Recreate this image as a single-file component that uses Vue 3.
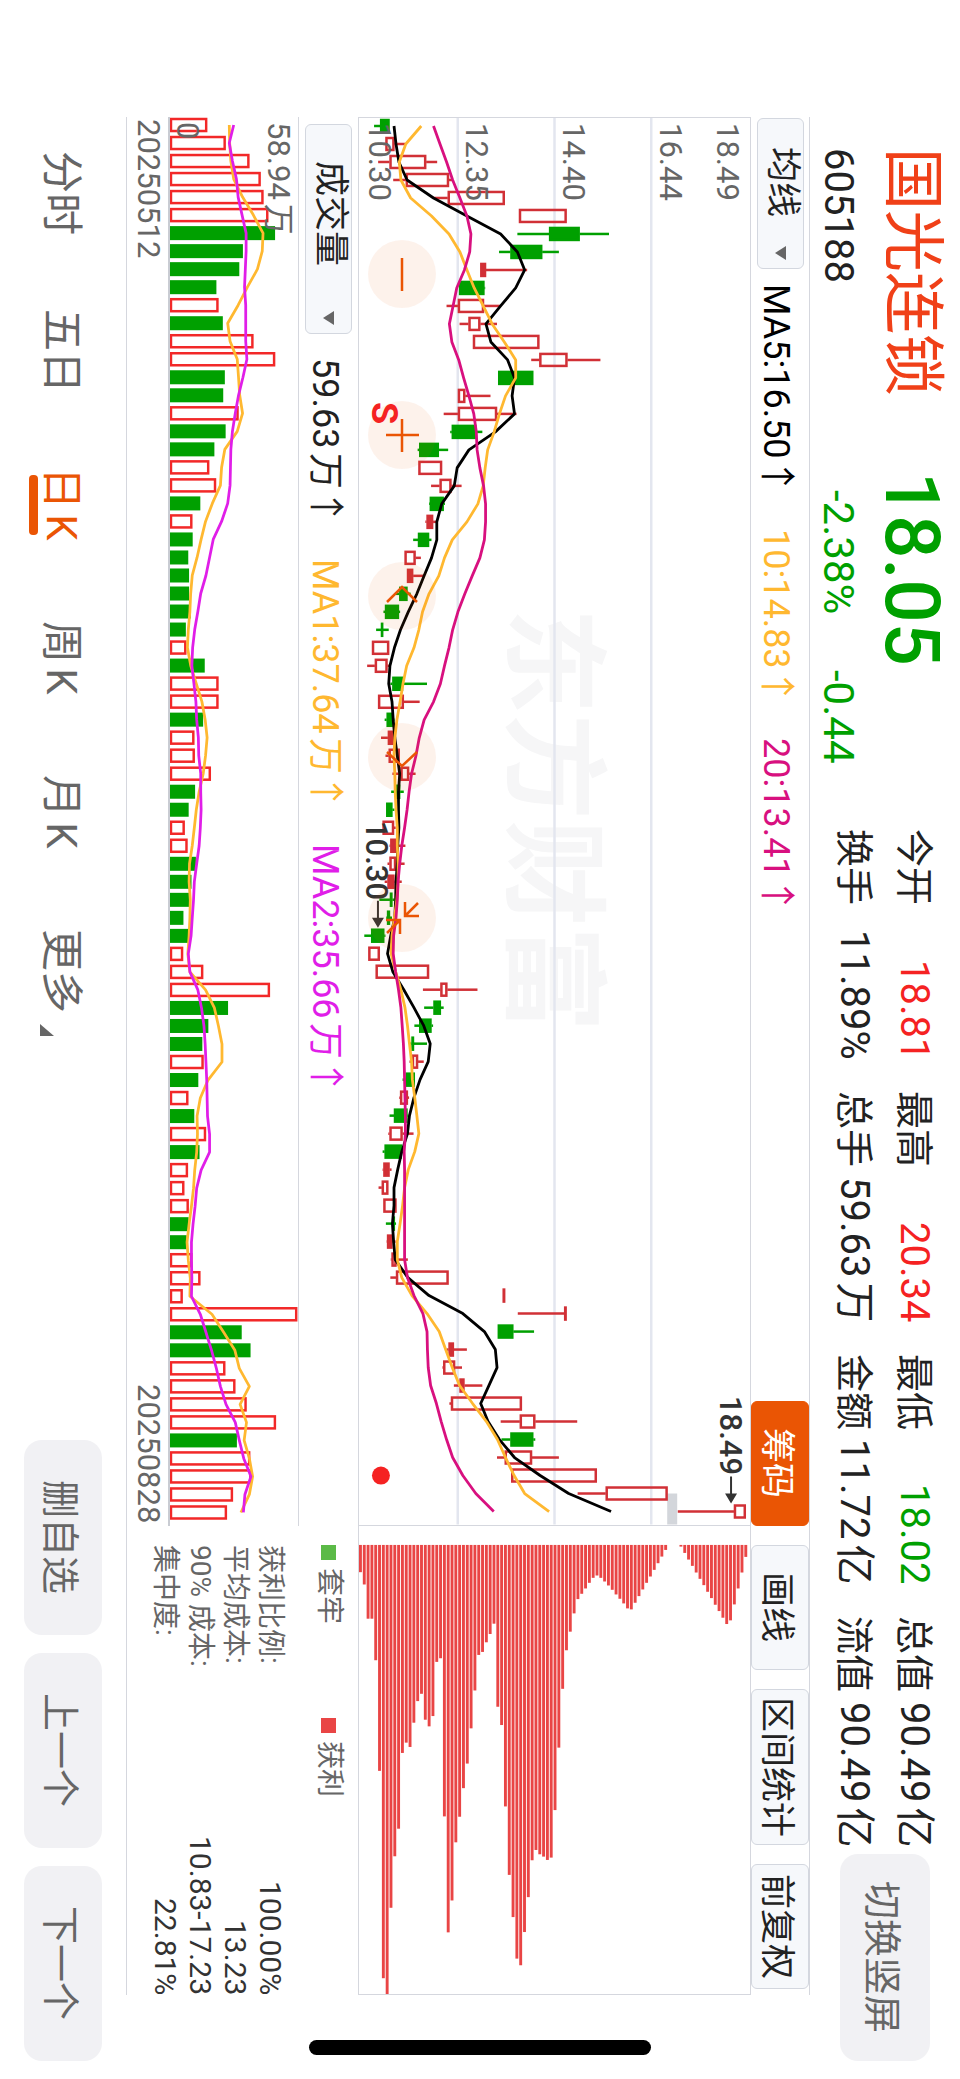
<template>
  <div class="screen">
    <header class="header">
      <div class="quote">
        <h1 class="name">国光连锁</h1>
        <strong class="price">18.05</strong>
        <span class="code">605188</span>
        <div class="change">
          <span>-2.38%</span>
          <span>-0.44</span>
        </div>
      </div>

      <div class="stats">
        <div v-for="item in stats" :key="item.label" class="stat">
          <span>{{ item.label }}</span>
          <span class="stat-value" :class="item.tone">{{ item.value }}</span>
        </div>
      </div>

      <button type="button" class="soft-btn rotate-btn">切换竖屏</button>
    </header>

    <main class="main">
      <div class="toolbar">
        <label class="picker">
          <select class="picker-select" aria-label="主图指标">
            <option>均线</option>
          </select>
          <svg class="caret" viewBox="0 0 11 14"><path d="M0 7 11 0v14z" /></svg>
        </label>
        <span class="ma ma5">MA5:16.50<i>↑</i></span>
        <span class="ma ma10">10:14.83<i>↑</i></span>
        <span class="ma ma20">20:13.41<i>↑</i></span>
        <div class="tools">
          <button type="button" class="tool active">筹码</button>
          <button type="button" class="tool">画线</button>
          <button type="button" class="tool wide">区间统计</button>
          <button type="button" class="tool">前复权</button>
        </div>
      </div>

      <div class="panels">
        <section class="price-chart">
          <span class="watermark">东方财富</span>
          <svg class="plot" viewBox="0 0 392 1407" preserveAspectRatio="none">
            <line v-for="x in gridLines" :key="x" :x1="x" :x2="x" y1="0" y2="1407" class="grid-line" />
            <rect x="309" y="1376" width="10" height="31" class="gap-mark" />
            <g v-for="(c, i) in candles" :key="i" :class="c.type">
              <line :x1="c.low" :x2="c.bodyLow" :y1="c.y" :y2="c.y" class="wick" />
              <line :x1="c.bodyHigh" :x2="c.high" :y1="c.y" :y2="c.y" class="wick" />
              <rect :x="c.bodyLow + 1" :y="c.y - 6" :width="c.bodyWidth" height="12" class="body" />
            </g>
            <polyline :points="priceLines.ma5" class="line ma5-line" />
            <polyline :points="priceLines.ma10" class="line ma10-line" />
            <polyline :points="priceLines.ma20" class="line ma20-line" />
            <circle cx="22" cy="1358" r="9" class="event-dot" />
            <g class="pointer">
              <path d="M19 783v20M373 1359v20" />
              <path d="M13 800h12l-6 10zM367 1376h12l-6 10z" class="pointer-head" />
            </g>
          </svg>

          <span
            v-for="tick in priceTicks"
            :key="tick.text"
            class="tick"
            :style="{ insetBlockEnd: tick.offset + 'px' }"
          >{{ tick.text }}</span>
          <span class="mark low-mark">10.30</span>
          <span class="mark high-mark">18.49</span>

          <div class="controls">
            <button v-for="c in controls" :key="c.label" type="button" class="control" :aria-label="c.label">
              <svg viewBox="-34 -34 68 68"><path :d="c.path" /></svg>
            </button>
          </div>
          <span class="sell">S</span>
        </section>

        <section class="chips-chart">
          <svg class="plot" viewBox="0 0 392 470" preserveAspectRatio="none">
            <rect v-for="(b, i) in chips" :key="i" :x="b.x" y="19" width="2.9" :height="b.size" />
          </svg>
        </section>

        <div class="volume-bar">
          <label class="picker">
            <select class="picker-select volume-select" aria-label="副图指标">
              <option>成交量</option>
            </select>
            <svg class="caret" viewBox="0 0 11 14"><path d="M0 7 11 0v14z" /></svg>
          </label>
          <span class="ma volume-now">59.63万<i>↑</i></span>
          <span class="ma ma10">MA1:37.64万<i>↑</i></span>
          <span class="ma ma-volume">MA2:35.66万<i>↑</i></span>
        </div>

        <div class="legend">
          <span class="legend-item trapped">套牢</span>
          <span class="legend-item profit">获利</span>
        </div>

        <section class="volume">
          <div class="volume-chart">
            <svg class="plot" viewBox="0 0 130 1407" preserveAspectRatio="none">
              <template v-for="(v, i) in volumes" :key="i">
                <rect v-if="v.up" x="1" :y="v.y - 6" :width="v.size - 2" height="12" class="volume-up" />
                <rect v-else x="0" :y="v.y - 7" :width="v.size" height="14" class="volume-down" />
              </template>
              <polyline :points="volumeLines.ma1" class="line ma10-line" />
              <polyline :points="volumeLines.ma2" class="line ma-volume-line" />
            </svg>
            <span class="tick volume-top">58.94万</span>
            <span class="tick volume-zero">0</span>
          </div>
          <div class="dates">
            <span>20250512</span>
            <span>20250828</span>
          </div>
        </section>

        <dl class="cost">
          <div v-for="row in cost" :key="row.label">
            <dt>{{ row.label }}:</dt>
            <dd>{{ row.value }}</dd>
          </div>
        </dl>
      </div>
    </main>

    <footer class="footer">
      <nav class="tabs">
        <a v-for="tab in tabs" :key="tab" href="#" class="tab" :class="{ current: tab === '日K' }">{{ tab }}</a>
        <a href="#" class="tab more">更多<svg viewBox="0 0 14 12"><path d="M0 0v12h14z" /></svg></a>
      </nav>
      <div class="actions">
        <button type="button" class="soft-btn">删自选</button>
        <button type="button" class="soft-btn">上一个</button>
        <button type="button" class="soft-btn">下一个</button>
      </div>
    </footer>
    <div class="home-indicator"></div>
  </div>
</template>

<script setup>
const stats = [
  { label: '今开', value: '18.81', tone: 'up' },
  { label: '最高', value: '20.34', tone: 'up' },
  { label: '最低', value: '18.02', tone: 'down' },
  { label: '总值', value: '90.49亿' },
  { label: '换手', value: '11.89%' },
  { label: '总手', value: '59.63万' },
  { label: '金额', value: '11.72亿' },
  { label: '流值', value: '90.49亿' }
];

const tabs = ['分时', '五日', '日K', '周K', '月K'];

const cost = [
  { label: '获利比例', value: '100.00%' },
  { label: '平均成本', value: '13.23' },
  { label: '90% 成本', value: '10.83-17.23' },
  { label: '集中度', value: '22.81%' }
];

const controls = [
  { label: '缩小', path: 'M0-16V17' },
  { label: '放大', path: 'M0-16V17M-16 0H17' },
  { label: '左移', path: 'M-15 6 0-9 15 6' },
  { label: '右移', path: 'M-15-5 0 9 15-5' },
  { label: '收起', path: 'M3-16V-2H17M3-2 16-15M-16 2H-2V16M-2 2-15 15' }
];

const gridLines = [99, 196, 293];

const priceTicks = [
  { text: '18.49', offset: 353 },
  { text: '16.44', offset: 296 },
  { text: '14.40', offset: 199 },
  { text: '12.35', offset: 102 },
  { text: '10.30', offset: 5 }
];

// Chart values are stored in raw units, 2.45 of them per pixel
const UNIT = 2.45;
const PRICE_BASE = 585;
const VOLUME_BASE = 125;
const STEP = 18;

const slot = (i) => 8 + i * STEP;
const priceX = (v) => (v - PRICE_BASE) / UNIT;
const volumeX = (v) => (v - VOLUME_BASE) / UNIT + 1;

const toPoints = (values, scale) =>
  values.map((v, i) => `${scale(v).toFixed(1)},${slot(i)}`).join(' ');

// type, body low, body high, low, high
const candleData = [
  ['fall', 637, 660, 622, 660], ['rise', 650, 672, 645, 698], ['rise', 660, 750, 632, 777],
  ['rise', 700, 806, 669, 816], ['rise', 803, 943, 768, 943], ['rise', 978, 1095, 978, 1095],
  ['fall', 1052, 1127, 974, 1199], ['fall', 957, 1035, 929, 1076], ['flat', 883, 897, 883, 998],
  ['fall', 831, 893, 831, 895], ['rise', 828, 892, 800, 932], ['rise', 854, 883, 832, 924],
  ['rise', 865, 1028, 865, 1028], ['rise', 1028, 1097, 1008, 1178], ['fall', 927, 1013, 927, 1013],
  ['rise', 828, 846, 828, 908], ['rise', 828, 924, 793, 972], ['fall', 813, 873, 809, 888],
  ['fall', 733, 781, 729, 804], ['rise', 731, 789, 731, 789], ['rise', 783, 812, 762, 837],
  ['fall', 759, 793, 757, 796], ['flat', 751, 767, 748, 775], ['fall', 730, 757, 718, 763],
  ['rise', 697, 724, 697, 737], ['flat', 703, 718, 703, 745], ['fall', 684, 704, 675, 712],
  ['fall', 649, 683, 645, 686], ['fall', 639, 644, 627, 658], ['rise', 617, 659, 617, 659],
  ['rise', 624, 655, 605, 661], ['fall', 667, 693, 662, 752], ['rise', 632, 695, 632, 734],
  ['fall', 653, 670, 648, 672], ['flat', 656, 671, 639, 675], ['rise', 658, 685, 650, 685],
  ['rise', 687, 708, 667, 724], ['fall', 676, 686, 664, 695], ['fall', 652, 667, 652, 672],
  ['rise', 643, 671, 643, 675], ['flat', 662, 676, 660, 699], ['rise', 660, 676, 655, 697],
  ['flat', 655, 672, 648, 690], ['fall', 661, 667, 635, 672], ['fall', 654, 661, 652, 666],
  ['fall', 615, 647, 598, 650], ['rise', 608, 636, 608, 636], ['rise', 626, 757, 626, 757],
  ['rise', 785, 802, 742, 876], ['fall', 768, 786, 745, 793], ['fall', 733, 763, 721, 767],
  ['fall', 714, 720, 709, 752], ['rise', 715, 730, 709, 744], ['fall', 700, 722, 692, 722],
  ['rise', 686, 705, 684, 708], ['fall', 671, 704, 660, 706], ['rise', 660, 692, 657, 719],
  ['fall', 648, 690, 643, 692], ['flat', 645, 660, 643, 665], ['rise', 641, 657, 633, 657],
  ['rise', 645, 677, 645, 677], ['fall', 667, 673, 651, 676], ['flat', 654, 667, 653, 675],
  ['rise', 665, 677, 663, 705], ['rise', 676, 805, 662, 805], ['flat', 938, 944, 938, 944],
  ['flat', 1089, 1095, 975, 1095], ['fall', 926, 964, 926, 1015], ['flat', 805, 818, 800, 850],
  ['rise', 792, 821, 790, 838], ['flat', 832, 844, 818, 888], ['rise', 811, 985, 807, 985],
  ['rise', 980, 1018, 933, 1121], ['fall', 957, 1013, 935, 1018], ['rise', 943, 1010, 924, 1076],
  ['rise', 959, 1169, 959, 1169], ['rise', 1191, 1343, 1122, 1343], ['rise', 1506, 1535, 1368, 1535]
];

const candles = candleData.map(([type, bodyLow, bodyHigh, low, high], i) => ({
  type,
  y: slot(i),
  bodyLow: priceX(bodyLow),
  bodyHigh: priceX(bodyHigh),
  bodyWidth: Math.max((bodyHigh - bodyLow) / UNIT - 2, 0.2),
  low: priceX(low),
  high: priceX(high)
}));

const priceLines = {
  ma5: toPoints([
    671, 676, 683, 703, 768, 850, 933, 974, 992, 970, 933, 897, 909, 950, 967, 961, 967, 920, 855, 826,
    819, 788, 776, 776, 763, 745, 727, 706, 687, 672, 661, 658, 666, 669, 673, 679, 685, 682, 682, 683,
    680, 679, 676, 675, 673, 663, 655, 668, 695, 720, 744, 760, 755, 735, 720, 709, 704, 690, 680, 671,
    671, 667, 670, 674, 705, 757, 840, 893, 920, 924, 904, 884, 902, 930, 967, 1030, 1100, 1204
  ], priceX),
  ma10: toPoints([
    738, 700, 684, 688, 712, 763, 806, 833, 850, 868, 890, 912, 942, 970, 970, 945, 930, 917, 901, 895,
    890, 877, 850, 814, 795, 781, 757, 741, 732, 720, 702, 693, 686, 678, 673, 671, 673, 674, 676, 679,
    679, 681, 681, 678, 672, 666, 664, 675, 688, 698, 704, 709, 714, 716, 722, 727, 732, 722, 706, 697,
    692, 686, 679, 679, 690, 715, 752, 782, 798, 814, 832, 864, 898, 925, 945, 966, 992, 1052
  ], priceX),
  ma20: toPoints([
    768, 784, 800, 815, 833, 850, 860, 857, 844, 825, 816, 807, 813, 830, 842, 855, 867, 873, 875, 882,
    891, 896, 896, 893, 882, 863, 845, 828, 815, 806, 795, 785, 768, 745, 733, 725, 714, 708, 703, 697,
    690, 685, 681, 679, 676, 670, 669, 675, 682, 688, 691, 694, 696, 697, 698, 699, 699, 696, 697, 697,
    697, 697, 697, 697, 704, 720, 742, 752, 753, 755, 761, 775, 787, 800, 815, 840, 872, 916
  ], priceX)
};

// negative values are falling days
const volumeData = [
  215, 261, 320, 348, 355, 367, -384, -304, -295, -238, 243, -254, 330, 384, -259, -255, 293, -261, -233, 220,
  237, -198, 178, -179, -168, -170, -170, -174, -162, 163, -209, 243, 243, -205, 183, 184, 224, -185, -169, 159,
  166, -187, -176, -172, -156, -170, 155, 205, 371, -267, -218, -203, 206, -193, 168, -183, 212, -196, 167, 158,
  169, -169, -164, 178, 198, 154, 439, -301, -323, 260, 285, 313, 386, -289, 322, 325, 279, 264
];

const volumes = volumeData.map((v, i) => ({
  up: v > 0,
  y: slot(i),
  size: volumeX(Math.abs(v))
}));

const volumeLines = {
  ma1: toPoints([
    270, 271, 274, 281, 303, 330, 354, 352, 340, 315, 292, 266, 272, 290, 293, 296, 303, 290, 259, 251,
    248, 228, 211, 200, 190, 178, 174, 172, 168, 166, 174, 188, 202, 210, 215, 211, 205, 195, 188, 183,
    178, 171, 170, 173, 172, 170, 167, 172, 211, 233, 243, 252, 252, 217, 198, 190, 191, 189, 184, 181,
    176, 170, 165, 168, 173, 172, 227, 256, 284, 295, 320, 297, 313, 307, 320, 328, 320, 299
  ], volumeX),
  ma2: toPoints([
    281, 270, 278, 288, 292, 302, 312, 312, 310, 308, 311, 311, 311, 314, 304, 293, 285, 278, 274, 273,
    272, 266, 251, 230, 221, 212, 199, 192, 184, 179, 177, 182, 187, 189, 193, 194, 199, 199, 200, 198,
    195, 189, 183, 181, 178, 175, 168, 172, 192, 201, 207, 210, 212, 214, 215, 216, 221, 221, 200, 189,
    185, 180, 176, 176, 177, 176, 198, 212, 226, 238, 248, 262, 285, 295, 306, 324, 309, 305
  ], volumeX)
};

const CHIP_BASE = 130;
const chipData = [
  212, 249, 352, 352, 477, 810, 1434, 1483, 1222, 1067, 984, 756, 725, 738, 665, 600, 578, 656, 676, 645,
  482, 471, 947, 1296, 1200, 1025, 948, 862, 788, 682, 568, 461, 452, 423, 398, 367, 617, 672, 917, 1123,
  1250, 1375, 1395, 1295, 1190, 1079, 1048, 1061, 1068, 1078, 1071, 928, 740, 563, 447, 391, 336, 293, 277, 261,
  244, 229, 222, 229, 240, 252, 265, 279, 292, 306, 321, 324, 304, 284, 264, 244, 225, 205, 185, 165,
  145, 130, 130, 130, 135, 154, 174, 193, 213, 232, 251, 271, 290, 310, 329, 349, 368, 357, 309, 261,
  213, 166
];

const chips = chipData.map((v, i) => ({
  x: i * 3.825,
  size: (v - CHIP_BASE) / 3
}));
</script>

<style>
body {
  margin: 0;
  background: #fff;
}
</style>

<style scoped>
/* The whole screen is laid out sideways: inline runs down, block runs to the left */
.screen {
  position: relative;
  box-sizing: border-box;
  width: 100%;
  height: 100vh;
  writing-mode: vertical-rl;
  text-orientation: sideways;
  display: flex;
  flex-direction: column;
  background: #fff;
  color: #222;
  font-family: Roboto, "Noto Sans CJK SC", sans-serif;
  font-size: 38px;
  line-height: 60px;
  white-space: nowrap;
  text-autospace: normal;
  overflow: hidden;
}

button,
select {
  margin: 0;
  font-family: inherit;
  text-orientation: sideways;
  writing-mode: vertical-rl;
  white-space: nowrap;
  cursor: pointer;
}

.header {
  box-sizing: border-box;
  flex: none;
  block-size: 150px;
  display: flex;
  padding-inline: 148px 18px;
}

.quote {
  box-sizing: border-box;
  flex: none;
  inline-size: 681px;
  display: grid;
  grid-template-columns: 324px 1fr;
  grid-template-rows: 76px 60px;
  row-gap: 6px;
  padding-block-start: 10px;
}

.name {
  margin: 0;
  color: #f04018;
  font-size: 62px;
  font-weight: 400;
  line-height: 76px;
}

.price {
  color: #00a000;
  font-size: 76px;
  font-weight: 500;
  line-height: 76px;
}

.code {
  font-size: 40px;
}

.change {
  display: flex;
  gap: 56px;
  padding-inline-start: 18px;
  color: #00a000;
  font-size: 42px;
}

.stats {
  flex: 1;
  display: grid;
  grid-template-columns: repeat(4, 1fr);
  grid-template-rows: 60px 60px;
  column-gap: 31px;
  padding-block-start: 16px;
}

.stat {
  display: flex;
  justify-content: space-between;
}

.stat-value {
  font-size: 40px;
}

.up {
  color: #f52222;
}

.down {
  color: #00a000;
}

.soft-btn {
  border: none;
  border-radius: 18px;
  padding: 0;
  background: #f1f1f4;
  color: #666;
  font-size: 38px;
  text-align: center;
}

.rotate-btn {
  flex: none;
  align-self: center;
  inline-size: 207px;
  block-size: 90px;
  margin-inline-start: 7px;
}

.main {
  flex: 1;
  min-block-size: 0;
  display: flex;
  flex-direction: column;
  margin-inline: 117px 84px;
  border-block-start: 1px solid #d5d7de;
  border-block-end: 1px solid #d5d7de;
}

.toolbar,
.volume-bar {
  display: flex;
  align-items: center;
  font-size: 36px;
}

.toolbar {
  flex: none;
  block-size: 58px;
  padding-inline: 1px 6px;
}

.volume-bar {
  padding-inline-start: 7px;
}

.picker {
  position: relative;
  display: flex;
}

.picker-select {
  appearance: none;
  box-sizing: border-box;
  block-size: 47px;
  padding-block: 0;
  padding-inline: 28px 50px;
  border: 1px solid #d3d7df;
  border-radius: 6px;
  background: #f6f8fb;
  color: #222;
  font-size: 35px;
}

.volume-select {
  padding-inline: 36px 66px;
}

.caret {
  position: absolute;
  inset-inline-end: 9px;
  inset-block-start: 18px;
  width: 11px;
  height: 14px;
  fill: #666;
  pointer-events: none;
}

.ma {
  margin-inline-end: 34px;
  padding-block-start: 4px;
}

.ma i {
  font-family: "Noto Sans CJK SC", sans-serif;
  font-style: normal;
}

.picker + .ma {
  margin-inline-start: 15px;
}

.picker + .volume-now {
  margin-inline-start: 24px;
}

.ma5 {
  color: #000;
}

.ma10 {
  color: #ffb830;
}

.ma20 {
  color: #d8107f;
}

.ma-volume {
  color: #e01ee8;
}

.tools {
  display: flex;
  gap: 19px;
  margin-inline-start: auto;
}

.tool {
  box-sizing: border-box;
  inline-size: 125px;
  block-size: 58px;
  padding: 0;
  border: 1px solid #d3d7df;
  border-radius: 6px;
  background: #f6f8fb;
  color: #222;
  font-size: 35px;
}

.tool.wide {
  inline-size: 156px;
}

.tool.active {
  border-color: #ea5504;
  background: #ea5504;
  color: #fff;
}

.panels {
  flex: 1;
  display: grid;
  grid-template-columns: 3fr 1fr;
  grid-template-rows: 393px 59px 1fr;
}

.price-chart,
.chips-chart {
  position: relative;
  box-sizing: border-box;
  border: 1px solid #d5d7de;
}

.chips-chart {
  border-inline-start: none;
}

.plot {
  position: absolute;
  top: 0;
  left: 0;
  width: 100%;
  height: 100%;
}

.watermark {
  position: absolute;
  inset-inline-start: 490px;
  inset-block-end: 141px;
  color: #f6f6f7;
  font-size: 106px;
  font-weight: 700;
  line-height: 104px;
}

.grid-line {
  stroke: #e3e6ef;
  stroke-width: 2.5;
}

.gap-mark {
  fill: #d3d6db;
}

.wick,
.body {
  stroke-width: 2.5;
}

.rise,
.flat {
  stroke: #d13036;
  fill: none;
}

.flat {
  fill: #d13036;
}

.fall {
  stroke: #00a000;
  fill: #00a000;
}

.volume-up {
  fill: none;
  stroke: #f22828;
  stroke-width: 2.5;
}

.volume-down {
  fill: #00a000;
}

.line {
  fill: none;
  stroke-width: 2.8;
  stroke-linejoin: round;
}

.ma5-line {
  stroke: #000;
}

.ma10-line {
  stroke: #ffb830;
}

.ma20-line {
  stroke: #d8107f;
}

.ma-volume-line {
  stroke: #e01ee8;
}

.event-dot {
  fill: #f52222;
}

.pointer {
  fill: none;
  stroke: #333;
  stroke-width: 2;
}

.pointer-head {
  fill: #333;
  stroke: none;
}

.tick,
.mark {
  position: absolute;
  color: #666;
  font-size: 31px;
  line-height: 30px;
}

.tick {
  inset-inline-start: 5px;
}

.mark {
  color: #333;
  font-weight: 500;
}

.low-mark {
  inset-inline-start: 703px;
  inset-block-end: 2px;
}

.high-mark {
  inset-inline-start: 1278px;
  inset-block-end: 356px;
}

.controls {
  position: absolute;
  inset-inline-start: 122px;
  inset-block-end: 9px;
  display: flex;
  gap: 93px;
}

.control {
  width: 68px;
  height: 68px;
  padding: 0;
  border: none;
  border-radius: 50%;
  background: rgba(234, 85, 4, 0.08);
}

.control svg {
  display: block;
  width: 68px;
  height: 68px;
  fill: none;
  stroke: #ea5504;
  stroke-width: 2.5;
}

.sell {
  position: absolute;
  inset-inline-start: 284px;
  inset-block-end: 8px;
  color: #f52222;
  font-size: 36px;
  font-weight: 700;
  line-height: 34px;
}

.chips-chart rect {
  fill: #e94545;
}

.legend {
  display: flex;
  align-items: center;
  padding-inline-start: 19px;
  color: #666;
  font-size: 28px;
}

.legend-item {
  display: flex;
  align-items: center;
  gap: 8px;
  inline-size: 173px;
}

.legend-item::before {
  content: "";
  width: 15px;
  height: 15px;
}

.trapped::before {
  background: #5bba47;
}

.profit::before {
  background: #e94545;
}

.volume {
  display: flex;
  flex-direction: column;
}

.volume-chart {
  position: relative;
  box-sizing: border-box;
  flex: none;
  block-size: 131px;
  border-block-start: 1px solid #d5d7de;
  border-block-end: 2px solid #c9ccd3;
}

.volume-top {
  inset-block-start: 5px;
}

.volume-zero {
  inset-block-end: 2px;
}

.dates {
  flex: 1;
  display: flex;
  align-items: center;
  justify-content: space-between;
  padding-inline: 2px;
  color: #666;
  font-size: 31px;
  line-height: 40px;
}

.cost {
  margin: 0;
  padding-block-start: 11px;
  padding-inline-start: 19px;
  font-size: 28px;
  line-height: 35px;
}

.cost div {
  display: flex;
  justify-content: space-between;
}

.cost dt {
  color: #666;
}

.cost dd {
  margin: 0;
  color: #333;
  font-size: 30px;
}

.footer {
  flex: none;
  block-size: 126px;
  display: flex;
  align-items: center;
  justify-content: space-between;
  padding-inline: 151px 18px;
}

.tabs {
  display: flex;
  gap: 74px;
  padding-block-start: 4px;
}

.tab {
  position: relative;
  min-inline-size: 80px;
  color: #666;
  font-size: 42px;
  text-decoration: none;
}

.tab.current {
  color: #ea5504;
}

.tab.current::after {
  content: "";
  position: absolute;
  inset-inline-start: 8px;
  inset-block-end: -2px;
  inline-size: 60px;
  block-size: 9px;
  border-radius: 4px;
  background: #ea5504;
}

.more svg {
  position: absolute;
  inset-inline-start: 95px;
  inset-block-end: 9px;
  width: 14px;
  height: 12px;
  fill: #666;
}

.actions {
  display: flex;
  gap: 18px;
}

.actions .soft-btn {
  inline-size: 195px;
  block-size: 78px;
}

.home-indicator {
  position: absolute;
  inset-inline-end: 24px;
  inset-block-start: 32.2%;
  inline-size: 15px;
  block-size: 35.6%;
  border-radius: 8px;
  background: #000;
}
</style>
